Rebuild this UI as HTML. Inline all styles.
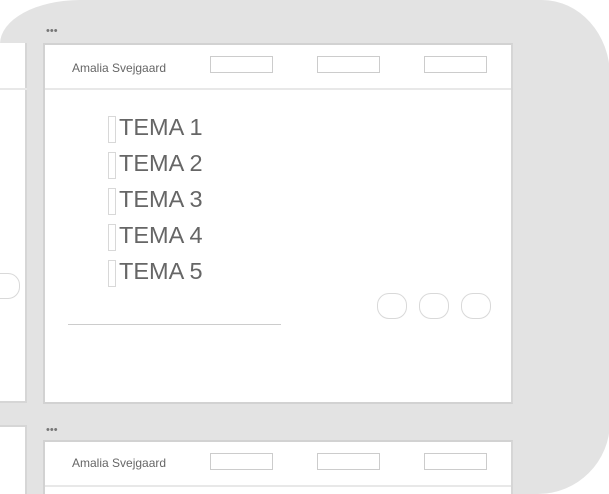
<!DOCTYPE html>
<html style="width:609px;height:494px;overflow:hidden"><head><style>
*{margin:0;padding:0;box-sizing:border-box}
body{width:609px;height:494px;background:#fff;position:relative;overflow:hidden;font-family:"Liberation Sans",sans-serif}
div{position:absolute}
.gray{left:0;top:0;width:610px;height:494px;background:#e3e3e3;border-radius:80px 68px 72px 0/44px 76px 72px 0}
.wl{background:#fff}
.panel{background:#fff;border:2px solid #d2d2d2;border-right:2px solid #d6d6d6}
.dots{font-size:11px;color:#777}
.name{font-size:12px;color:#666}
.box{border:1px solid #ccc;background:#fff;height:17px;width:63px}
.hl{height:2px;background:#e8e8e8}
.t{left:108px;width:120px;height:30px}
.t i{position:absolute;left:0;top:3px;width:8px;height:27px;border:1px solid #d8d8d8}
.t span{position:absolute;left:11px;top:1px;font-size:23.5px;color:#666}
.c{width:30px;height:26px;border:1px solid #d9d9d9;border-radius:12px;background:#fff}
</style></head><body>
<div class="gray"></div>
<div class="wl" style="left:0;top:43px;width:27px;height:360px;border-right:2px solid #d6d6d6;border-bottom:2px solid #d6d6d6"></div>
<div class="hl" style="left:0;top:88px;width:27px"></div>
<div class="c" style="left:-12px;top:273px;width:32px"></div>
<div class="wl" style="left:0;top:425px;width:27px;height:69px;border-right:2px solid #d6d6d6;border-top:2px solid #d6d6d6"></div>
<div class="dots" style="left:46px;top:25px">•••</div>
<div class="panel" style="left:43px;top:43px;width:470px;height:361px"></div>
<div class="name" style="left:72px;top:61px">Amalia Svejgaard</div>
<div class="box" style="left:210px;top:56px"></div>
<div class="box" style="left:317px;top:56px"></div>
<div class="box" style="left:424px;top:56px"></div>
<div class="hl" style="left:45px;top:88px;width:466px"></div>
<div class="t" style="top:113px"><i></i><span>TEMA 1</span></div>
<div class="t" style="top:149px"><i></i><span>TEMA 2</span></div>
<div class="t" style="top:185px"><i></i><span>TEMA 3</span></div>
<div class="t" style="top:221px"><i></i><span>TEMA 4</span></div>
<div class="t" style="top:257px"><i></i><span>TEMA 5</span></div>
<div class="c" style="left:377px;top:293px"></div>
<div class="c" style="left:419px;top:293px"></div>
<div class="c" style="left:461px;top:293px"></div>
<div style="left:68px;top:324px;width:213px;height:1px;background:#ccc"></div>
<div class="dots" style="left:46px;top:424px">•••</div>
<div class="panel" style="left:43px;top:440px;width:470px;height:54px;border-bottom:none"></div>
<div class="name" style="left:72px;top:456px">Amalia Svejgaard</div>
<div class="box" style="left:210px;top:453px"></div>
<div class="box" style="left:317px;top:453px"></div>
<div class="box" style="left:424px;top:453px"></div>
<div class="hl" style="left:45px;top:485px;width:466px"></div>
</body></html>
